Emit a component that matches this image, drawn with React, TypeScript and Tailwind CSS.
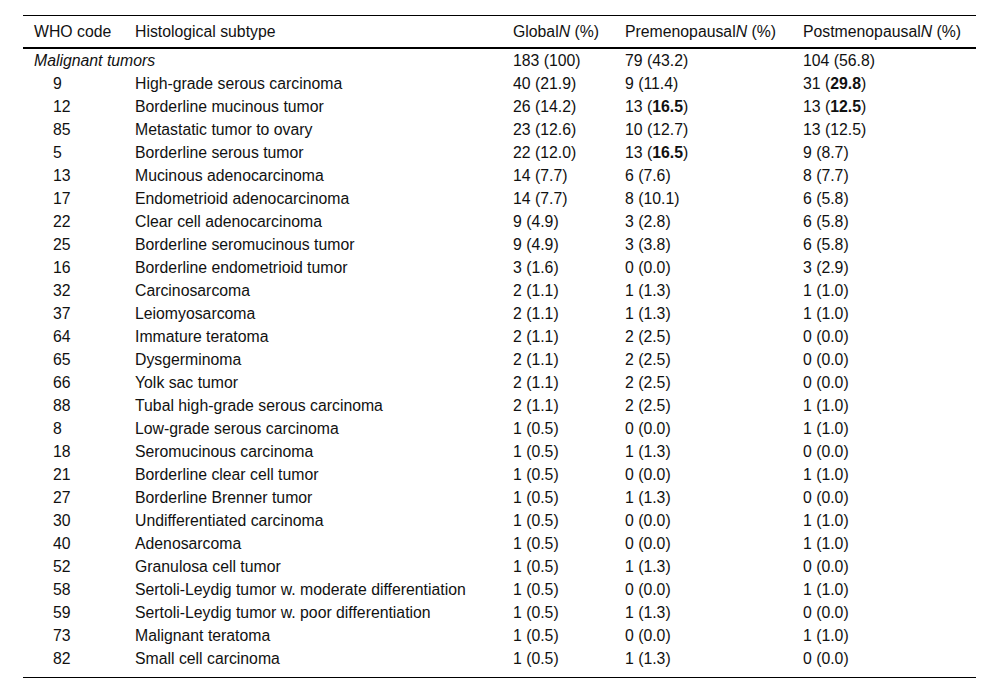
import React from "react";

type V = string;
const rows: [string, string, V, V, V][] = [
  ["9", "High-grade serous carcinoma", "40 (21.9)", "9 (11.4)", "31 (*29.8*)"],
  ["12", "Borderline mucinous tumor", "26 (14.2)", "13 (*16.5*)", "13 (*12.5*)"],
  ["85", "Metastatic tumor to ovary", "23 (12.6)", "10 (12.7)", "13 (12.5)"],
  ["5", "Borderline serous tumor", "22 (12.0)", "13 (*16.5*)", "9 (8.7)"],
  ["13", "Mucinous adenocarcinoma", "14 (7.7)", "6 (7.6)", "8 (7.7)"],
  ["17", "Endometrioid adenocarcinoma", "14 (7.7)", "8 (10.1)", "6 (5.8)"],
  ["22", "Clear cell adenocarcinoma", "9 (4.9)", "3 (2.8)", "6 (5.8)"],
  ["25", "Borderline seromucinous tumor", "9 (4.9)", "3 (3.8)", "6 (5.8)"],
  ["16", "Borderline endometrioid tumor", "3 (1.6)", "0 (0.0)", "3 (2.9)"],
  ["32", "Carcinosarcoma", "2 (1.1)", "1 (1.3)", "1 (1.0)"],
  ["37", "Leiomyosarcoma", "2 (1.1)", "1 (1.3)", "1 (1.0)"],
  ["64", "Immature teratoma", "2 (1.1)", "2 (2.5)", "0 (0.0)"],
  ["65", "Dysgerminoma", "2 (1.1)", "2 (2.5)", "0 (0.0)"],
  ["66", "Yolk sac tumor", "2 (1.1)", "2 (2.5)", "0 (0.0)"],
  ["88", "Tubal high-grade serous carcinoma", "2 (1.1)", "2 (2.5)", "1 (1.0)"],
  ["8", "Low-grade serous carcinoma", "1 (0.5)", "0 (0.0)", "1 (1.0)"],
  ["18", "Seromucinous carcinoma", "1 (0.5)", "1 (1.3)", "0 (0.0)"],
  ["21", "Borderline clear cell tumor", "1 (0.5)", "0 (0.0)", "1 (1.0)"],
  ["27", "Borderline Brenner tumor", "1 (0.5)", "1 (1.3)", "0 (0.0)"],
  ["30", "Undifferentiated carcinoma", "1 (0.5)", "0 (0.0)", "1 (1.0)"],
  ["40", "Adenosarcoma", "1 (0.5)", "0 (0.0)", "1 (1.0)"],
  ["52", "Granulosa cell tumor", "1 (0.5)", "1 (1.3)", "0 (0.0)"],
  ["58", "Sertoli-Leydig tumor w. moderate differentiation", "1 (0.5)", "0 (0.0)", "1 (1.0)"],
  ["59", "Sertoli-Leydig tumor w. poor differentiation", "1 (0.5)", "1 (1.3)", "0 (0.0)"],
  ["73", "Malignant teratoma", "1 (0.5)", "0 (0.0)", "1 (1.0)"],
  ["82", "Small cell carcinoma", "1 (0.5)", "1 (1.3)", "0 (0.0)"],
];

function Val({ v }: { v: string }) {
  const m = v.match(/^(.*\()\*(.*)\*(\))$/);
  if (!m) return <>{v}</>;
  return (
    <>
      {m[1]}
      <b className="font-bold">{m[2]}</b>
      {m[3]}
    </>
  );
}

export default function App() {
  return (
    <div
      className="w-[1000px] h-[691px] bg-white pt-[15px] pl-[23px] text-[15.8px] text-[#111]"
      style={{ fontFamily: '"Liberation Sans", Arial, sans-serif' }}
    >
      <table className="w-[953px] table-fixed border-collapse leading-[23px]">
        <colgroup>
          <col className="w-[101px]" />
          <col className="w-[378px]" />
          <col className="w-[112px]" />
          <col className="w-[178px]" />
          <col className="w-[184px]" />
        </colgroup>
        <thead>
          <tr className="border-t border-black border-b-2 h-[32px]">
            <th className="text-left font-normal pl-[11px]">WHO code</th>
            <th className="text-left font-normal pl-[11px]">Histological subtype</th>
            <th className="text-left font-normal pl-[11px] whitespace-nowrap">
              Global<i>N</i> (%)
            </th>
            <th className="text-left font-normal pl-[11px] whitespace-nowrap">
              Premenopausal<i>N</i> (%)
            </th>
            <th className="text-left font-normal pl-[11px] whitespace-nowrap">
              Postmenopausal<i>N</i> (%)
            </th>
          </tr>
        </thead>
        <tbody className="border-b border-black">
          <tr>
            <td className="pl-[11px] italic whitespace-nowrap" colSpan={2}>
              Malignant tumors
            </td>
            <td className="pl-[11px]">183 (100)</td>
            <td className="pl-[11px]">79 (43.2)</td>
            <td className="pl-[11px]">104 (56.8)</td>
          </tr>
          {rows.map((r, i) => {
            const last = i === rows.length - 1;
            const pb = last ? "pb-[7px]" : "";
            return (
              <tr key={i}>
                <td className={`pl-[30px] ${pb}`}>{r[0]}</td>
                <td className={`pl-[11px] whitespace-nowrap ${pb}`}>{r[1]}</td>
                <td className={`pl-[11px] whitespace-nowrap ${pb}`}>
                  <Val v={r[2]} />
                </td>
                <td className={`pl-[11px] whitespace-nowrap ${pb}`}>
                  <Val v={r[3]} />
                </td>
                <td className={`pl-[11px] whitespace-nowrap ${pb}`}>
                  <Val v={r[4]} />
                </td>
              </tr>
            );
          })}
        </tbody>
      </table>
    </div>
  );
}
